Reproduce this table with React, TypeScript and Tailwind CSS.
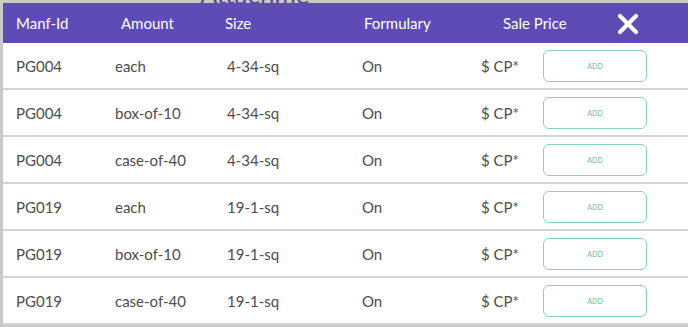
import React from "react";

const rows = [
  ["PG004", "each", "4-34-sq"],
  ["PG004", "box-of-10", "4-34-sq"],
  ["PG004", "case-of-40", "4-34-sq"],
  ["PG019", "each", "19-1-sq"],
  ["PG019", "box-of-10", "19-1-sq"],
  ["PG019", "case-of-40", "19-1-sq"],
];

export default function App() {
  return (
    <div
      className="relative w-[688px] h-[327px] overflow-hidden bg-[#c9c9c9] pl-[3px] pt-[3px]"
      style={{ fontFamily: "Lato, 'Open Sans', sans-serif" }}
    >
      <div className="absolute left-[200px] top-0 h-[3px] w-[110px] overflow-hidden">
        <div className="-mt-[19px] text-[26px] leading-[26px] text-[#5a4a9e] whitespace-nowrap">Attachments</div>
      </div>
      <div className="relative w-[690px] h-[322px] bg-white flex flex-col">
        <div className="h-[40px] shrink-0 bg-[#5e4bb6] flex items-center pl-[13px] text-white text-[15px]">
          <div className="w-[105px]">Manf-Id</div>
          <div className="w-[104px]">Amount</div>
          <div className="w-[139px]">Size</div>
          <div className="w-[139px]">Formulary</div>
          <div className="w-[114px]">Sale Price</div>
          <svg width="22" height="22" viewBox="0 0 22 22" className="mt-[2px]">
            <path d="M3 3 L19 19 M19 3 L3 19" stroke="white" strokeWidth="4.2" strokeLinecap="round" />
          </svg>
        </div>
        {rows.map((r, i) => (
          <div
            key={i}
            className="h-[47px] shrink-0 flex items-center pl-[13px] pt-[1px] text-[15px] text-[#4d4d4d] border-b-2 border-[#d4d4d4]"
          >
            <div className="w-[99px]">{r[0]}</div>
            <div className="w-[112px]">{r[1]}</div>
            <div className="w-[135px]">{r[2]}</div>
            <div className="w-[119px]">On</div>
            <div className="w-[62px]">$ CP*</div>
            <button className="w-[104px] h-[32px] rounded-[6px] border-[1.5px] border-[#86d3b8] text-[7px] text-[#79c9a9] bg-white font-semibold">
              ADD
            </button>
          </div>
        ))}
      </div>
    </div>
  );
}
